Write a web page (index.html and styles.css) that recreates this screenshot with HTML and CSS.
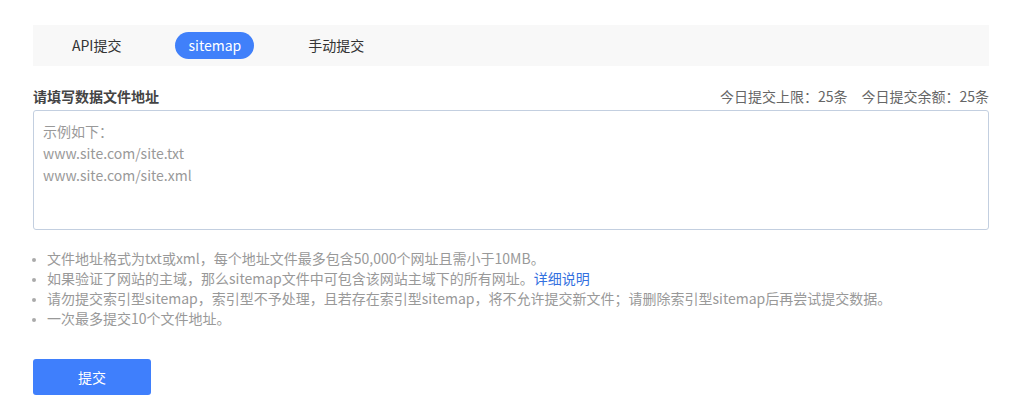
FILE: index.html
```html
<!DOCTYPE html>
<html lang="zh-CN">
<head>
<meta charset="utf-8">
<title>sitemap提交</title>
<link rel="stylesheet" href="styles.css">
</head>
<body>
<div class="page">
  <div class="tabs">
    <span class="tab">API提交</span>
    <span class="tab active">sitemap</span>
    <span class="tab">手动提交</span>
  </div>
  <div class="label-row">
    <span class="label">请填写数据文件地址</span>
    <span class="quota"><span>今日提交上限：25条</span><span class="q2">今日提交余额：25条</span></span>
  </div>
  <textarea class="input" placeholder="示例如下：&#10;www.site.com/site.txt&#10;www.site.com/site.xml"></textarea>
  <ul class="notes">
    <li>文件地址格式为txt或xml，每个地址文件最多包含50,000个网址且需小于10MB。</li>
    <li>如果验证了网站的主域，那么sitemap文件中可包含该网站主域下的所有网址。<a class="link" href="#">详细说明</a></li>
    <li>请勿提交索引型sitemap，索引型不予处理，且若存在索引型sitemap，将不允许提交新文件；请删除索引型sitemap后再尝试提交数据。</li>
    <li>一次最多提交10个文件地址。</li>
  </ul>
  <button class="submit" type="button">提交</button>
</div>
</body>
</html>
```

FILE: styles.css
```css
* { box-sizing: border-box; }
html, body { margin: 0; padding: 0; background: #fff; }
body {
  font-family: "Microsoft YaHei", "Noto Sans CJK SC", sans-serif;
  font-size: 14px;
  color: #333;
}
.page {
  padding: 25px 0 0 33px;
  width: 989px;
}
.tabs {
  display: flex;
  align-items: center;
  gap: 41px;
  height: 41px;
  padding-left: 26px;
  background: #f8f8f8;
}
.tab {
  display: inline-flex;
  align-items: center;
  height: 27px;
  padding: 0 13px;
  border-radius: 14px;
  color: #333;
  font-size: 14px;
  line-height: 27px;
}
.tab.active {
  background: #4080fa;
  color: #fff;
}
.label-row {
  display: flex;
  justify-content: space-between;
  align-items: center;
  height: 22px;
  margin-top: 19px;
  margin-bottom: 3px;
}
.label {
  font-weight: bold;
  color: #444;
}
.quota {
  display: flex;
  gap: 14px;
  color: #666;
}
.input {
  display: block;
  width: 956px;
  height: 120px;
  padding: 9px 9px;
  border: 1px solid #c3cfe0;
  border-radius: 3px;
  font-family: inherit;
  font-size: 14px;
  line-height: 22px;
  color: #333;
  resize: none;
  outline: none;
}
.input::placeholder { color: #999; opacity: 1; }
.notes {
  margin: 18px 0 0;
  padding: 0 0 0 14px;
  color: #999;
  font-size: 14px;
  line-height: 20px;
}
.notes li { padding-left: 0; }
.notes li::marker { color: #aaa; font-size: 11px; }
.link { color: #3370e0; text-decoration: none; }
.submit {
  display: block;
  margin-top: 31px;
  width: 118px;
  height: 36px;
  border: none;
  border-radius: 3px;
  background: #3f7ffc;
  color: #fff;
  font-family: inherit;
  font-size: 14px;
  cursor: pointer;
}
```
